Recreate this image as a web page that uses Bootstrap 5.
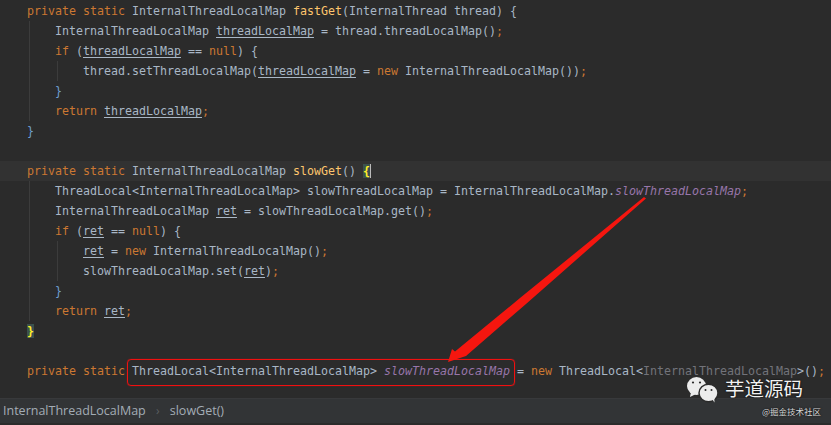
<!DOCTYPE html>
<html lang="en">
<head>
<meta charset="utf-8">
<title>InternalThreadLocalMap</title>
<link href="https://cdn.jsdelivr.net/npm/bootstrap@5.3.0/dist/css/bootstrap.min.css" rel="stylesheet">
<style>
html,body{height:425px;overflow:hidden;background:#2b2b2b}
.ide{height:425px;background:#2b2b2b}
.editor{padding-top:1px;font-family:"DejaVu Sans Mono","Liberation Mono",monospace;font-size:11.63px;color:#a9b7c6}
.ln{height:20px;line-height:20px;white-space:pre;padding-left:27px}
.gd{margin-left:29px;border-left:1px solid #3c3c3c;padding-left:25px}
.gd .gd{margin-left:2px;padding-left:25px}
.gd .ln{padding-left:0}
.caret-ln{background:#323232}
.k{color:#cc7832}
.m{color:#ffc66d}
.u{text-decoration:underline;text-underline-offset:2px;text-decoration-thickness:1px}
.f{color:#9876aa;font-style:italic}
.dim{color:#72737a}
.p{color:#6f9fcf}
.bm{background:#3b514d;color:#ffef28;font-weight:700}
.caret{border-right:1px solid #bbb}
.crumbs{height:25px;border-top:1px solid #38393b;background:#323436;font-family:"Open Sans","Noto Sans",sans-serif;font-size:12.5px;color:#a3acb5;padding-left:3px;line-height:24px;margin-bottom:2px}
.sep{color:#5a5e61;width:24px;text-align:center;font-size:12px}
.redbox{position:absolute;left:127px;top:359px;width:388px;height:27px;border:1px solid #f01010;box-shadow:0 0 1px #f01010;border-radius:4px}
.arrow{position:absolute;left:0;top:0;pointer-events:none}
.wm{position:absolute;left:687px;top:375px;gap:7px}
.wm-text{font-family:"Noto Sans CJK SC",sans-serif;font-size:19.5px;line-height:20px;margin-top:3px;color:#f2f2f2;text-shadow:0 0 2px #000}
.wm-small{position:absolute;right:10px;top:405px;font-family:"Noto Sans CJK SC",sans-serif;font-size:8.5px;line-height:13px;color:#d8d8d8;text-shadow:0 0 2px #000}
</style>
</head>
<body class="m-0">
<div class="ide position-relative d-flex flex-column">
  <div class="editor flex-grow-1">
    <div class="ln"><span class="k">private static </span>InternalThreadLocalMap <span class="m">fastGet</span>(InternalThread thread) {</div>
    <div class="gd">
      <div class="ln">InternalThreadLocalMap <span class="u">threadLocalMap</span> = thread.threadLocalMap()<span class="k">;</span></div>
      <div class="ln"><span class="k">if</span> (<span class="u">threadLocalMap</span> == <span class="k">null</span>) {</div>
      <div class="gd">
        <div class="ln">thread.setThreadLocalMap(<span class="u">threadLocalMap</span> = <span class="k">new</span> InternalThreadLocalMap())<span class="k">;</span></div>
      </div>
      <div class="ln"><span class="p">}</span></div>
      <div class="ln"><span class="k">return</span> <span class="u">threadLocalMap</span><span class="k">;</span></div>
    </div>
    <div class="ln"><span class="p">}</span></div>
    <div class="ln"></div>
    <div class="ln caret-ln"><span class="k">private static </span>InternalThreadLocalMap <span class="m">slowGet</span>() <span class="bm caret">{</span></div>
    <div class="gd">
      <div class="ln">ThreadLocal&lt;InternalThreadLocalMap&gt; slowThreadLocalMap = InternalThreadLocalMap.<span class="f">slowThreadLocalMap</span><span class="k">;</span></div>
      <div class="ln">InternalThreadLocalMap <span class="u">ret</span> = slowThreadLocalMap.get()<span class="k">;</span></div>
      <div class="ln"><span class="k">if</span> (<span class="u">ret</span> == <span class="k">null</span>) {</div>
      <div class="gd">
        <div class="ln"><span class="u">ret</span> = <span class="k">new</span> InternalThreadLocalMap()<span class="k">;</span></div>
        <div class="ln">slowThreadLocalMap.set(<span class="u">ret</span>)<span class="k">;</span></div>
      </div>
      <div class="ln"><span class="p">}</span></div>
      <div class="ln"><span class="k">return</span> <span class="u">ret</span><span class="k">;</span></div>
    </div>
    <div class="ln"><span class="bm">}</span></div>
    <div class="ln"></div>
    <div class="ln"><span class="k">private static </span>ThreadLocal&lt;InternalThreadLocalMap&gt; <span class="f">slowThreadLocalMap</span> = <span class="k">new</span> ThreadLocal&lt;<span class="dim">InternalThreadLocalMap</span>&gt;()<span class="k">;</span></div>
  </div>
  <div class="crumbs d-flex align-items-center">
    <span>InternalThreadLocalMap</span><span class="sep">›</span><span>slowGet()</span>
  </div>

  <div class="redbox"></div>
  <svg class="arrow" width="831" height="425" viewBox="0 0 831 425" aria-hidden="true">
    <polygon fill="#f5160f" points="646,198.500 526,304 466,356 448,362 452,349 455,351.500 520,298 644,197"/>
  </svg>
  <div class="wm d-flex align-items-start">
    <svg width="31" height="28" viewBox="0 0 31 28" aria-hidden="true">
      <ellipse cx="9.500" cy="11" rx="9.500" ry="9" fill="#ececec"/>
      <path fill="#ececec" d="M4 17l-1 5 6-3z"/>
      <circle cx="6" cy="7.500" r="1.100" fill="#2b2b2b"/><circle cx="13" cy="7.500" r="1.100" fill="#2b2b2b"/>
      <ellipse cx="21.500" cy="18" rx="9.500" ry="8.800" fill="#ececec" stroke="#2b2b2b" stroke-width="1.500"/>
      <path fill="#ececec" d="M25 24l2.500 3.500-.2-5z"/>
      <circle cx="18.500" cy="15" r="1" fill="#2b2b2b"/><circle cx="24.500" cy="15" r="1" fill="#2b2b2b"/>
    </svg>
    <span class="wm-text">芋道源码</span>
  </div>
  <div class="wm-small">@掘金技术社区</div>
</div>
</body>
</html>
